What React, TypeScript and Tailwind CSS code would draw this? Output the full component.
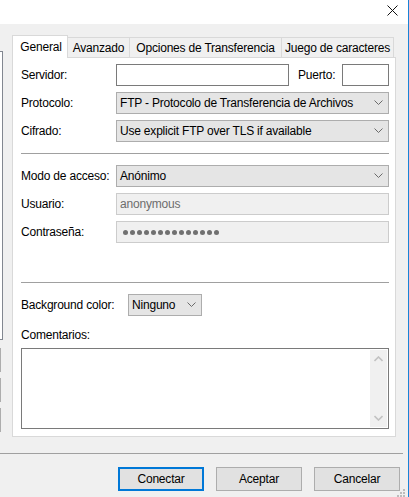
import React from "react";

function Chevron() {
  return (
    <svg width="9" height="6" viewBox="0 0 9 6" className="shrink-0">
      <polyline points="0.5,0.5 4.5,4.5 8.5,0.5" fill="none" stroke="#6a6a6a" strokeWidth="1" />
    </svg>
  );
}

function Select({ text, className = "" }: { text: string; className?: string }) {
  return (
    <div
      className={`h-[22px] border border-[#adadad] bg-[#e5e5e5] flex items-center pl-[3px] pr-[5px] ${className}`}
    >
      <span className="flex-1 whitespace-nowrap">{text}</span>
      <Chevron />
    </div>
  );
}

function Label({ children, w = "w-[95px]" }: { children: React.ReactNode; w?: string }) {
  return <div className={`${w} shrink-0 whitespace-nowrap`}>{children}</div>;
}

export default function App() {
  const dots = Array.from({ length: 14 });
  return (
    <div className="w-[409px] h-[497px] bg-[#f0f0f0] border-r border-[#1883d7] flex flex-col overflow-hidden relative text-[12px] leading-[16px] tracking-[-0.2px] text-black font-['Liberation_Sans',Arial,sans-serif]">
      {/* title bar */}
      <div className="h-[24px] bg-white flex justify-end items-start shrink-0">
        <svg width="11" height="11" viewBox="0 0 11 11" className="mt-[5px] mr-[10px]">
          <line x1="0.5" y1="0.5" x2="10.5" y2="10.5" stroke="#111" strokeWidth="1" />
          <line x1="10.5" y1="0.5" x2="0.5" y2="10.5" stroke="#111" strokeWidth="1" />
        </svg>
      </div>

      {/* main */}
      <div className="flex items-start shrink-0">
        {/* left strip */}
        <div className="w-[12px] shrink-0 flex flex-col pt-[27px]">
          <div className="w-[3px] h-[289px] border-r border-t border-b border-[#828790] bg-white" />
          <div className="w-[1px] h-[24px] bg-[#adadad] mt-[8px]" />
          <div className="w-[1px] h-[24px] bg-[#adadad] mt-[6px]" />
          <div className="w-[1px] h-[24px] bg-[#adadad] mt-[6px]" />
        </div>

        {/* tab control */}
        <div className="w-[384px] shrink-0 flex flex-col pt-[11px]">
          <div className="flex items-end h-[22px]">
            <div className="relative z-10 w-[56px] h-[23px] -mb-px bg-white border border-b-0 border-[#d9d9d9] flex items-start justify-center pt-[3px] pl-[2px]">
              General
            </div>
            <div className="w-[63px] h-[20px] -ml-px border border-b-0 border-[#d9d9d9] flex items-center justify-center">
              Avanzado
            </div>
            <div className="w-[153px] h-[20px] -ml-px border border-b-0 border-[#d9d9d9] flex items-center justify-center">
              Opciones de Transferencia
            </div>
            <div className="w-[113px] h-[20px] -ml-px border border-b-0 border-[#d9d9d9] flex items-center justify-center">
              Juego de caracteres
            </div>
          </div>

          <div className="h-[380px] border border-[#d9d9d9] bg-white pl-[8px] pr-[6px] pt-[6px] flex flex-col">
            <div className="flex items-center h-[22px]">
              <Label>Servidor:</Label>
              <div className="w-[173px] h-[22px] border border-[#7a7a7a] bg-white" />
              <div className="ml-[9px] w-[44px] whitespace-nowrap">Puerto:</div>
              <div className="w-[47px] h-[22px] border border-[#7a7a7a] bg-white" />
            </div>
            <div className="flex items-center h-[22px] mt-[6px]">
              <Label>Protocolo:</Label>
              <Select text="FTP - Protocolo de Transferencia de Archivos" className="flex-1" />
            </div>
            <div className="flex items-center h-[22px] mt-[6px]">
              <Label>Cifrado:</Label>
              <Select text="Use explicit FTP over TLS if available" className="flex-1" />
            </div>

            <div className="h-px bg-[#a0a0a0] mt-[11px]" />

            <div className="flex items-center h-[22px] mt-[11px]">
              <Label>Modo de acceso:</Label>
              <Select text="Anónimo" className="flex-1" />
            </div>
            <div className="flex items-center h-[22px] mt-[6px]">
              <Label>Usuario:</Label>
              <div className="flex-1 h-[22px] border border-[#cccccc] bg-[#f0f0f0] flex items-center pl-[3px] text-[#6d6d6d]">
                anonymous
              </div>
            </div>
            <div className="flex items-center h-[22px] mt-[6px]">
              <Label>Contraseña:</Label>
              <div className="flex-1 h-[22px] border border-[#cccccc] bg-[#f0f0f0] flex items-center pl-[6px] gap-[2px]">
                {dots.map((_, i) => (
                  <span key={i} className="w-[5px] h-[5px] rounded-full bg-[#707070]" />
                ))}
              </div>
            </div>

            <div className="h-px bg-[#a0a0a0] mt-[39px]" />

            <div className="flex items-center h-[22px] mt-[11px]">
              <Label w="w-[107px]">Background color:</Label>
              <Select text="Ninguno" className="w-[74px]" />
            </div>

            <div className="mt-[11px] h-[16px]">Comentarios:</div>

            <div className="mt-[5px] h-[81px] border border-[#7a7a7a] bg-white flex justify-end p-px">
              <div className="w-[17px] bg-[#f0f0f0] flex flex-col items-center justify-between py-[6px]">
                <svg width="9" height="6" viewBox="0 0 9 6">
                  <polyline points="0.5,5 4.5,1 8.5,5" fill="none" stroke="#c2c2c2" strokeWidth="1.6" />
                </svg>
                <svg width="9" height="6" viewBox="0 0 9 6">
                  <polyline points="0.5,1 4.5,5 8.5,1" fill="none" stroke="#c2c2c2" strokeWidth="1.6" />
                </svg>
              </div>
            </div>
          </div>
        </div>
      </div>

      {/* separator */}
      <div className="h-px w-[403px] bg-[#a0a0a0] mt-[16px] shrink-0" />

      {/* buttons */}
      <div className="flex justify-end gap-[12px] pr-[8px] mt-[13px] shrink-0">
        <div className="w-[86px] h-[24px] border-2 border-[#0078d7] bg-[#e1e1e1] flex items-center justify-center">
          Conectar
        </div>
        <div className="w-[86px] h-[24px] border border-[#adadad] bg-[#e1e1e1] flex items-center justify-center">
          Aceptar
        </div>
        <div className="w-[86px] h-[24px] border border-[#adadad] bg-[#e1e1e1] flex items-center justify-center">
          Cancelar
        </div>
      </div>

      {/* resize grip */}
      <div className="absolute right-[3px] bottom-0 w-[8px] h-[8px]">
        <span className="absolute left-[6px] top-0 w-[2px] h-[2px] bg-[#bcbcbc]" />
        <span className="absolute left-[3px] top-[3px] w-[2px] h-[2px] bg-[#bcbcbc]" />
        <span className="absolute left-[6px] top-[3px] w-[2px] h-[2px] bg-[#bcbcbc]" />
        <span className="absolute left-0 top-[6px] w-[2px] h-[2px] bg-[#bcbcbc]" />
        <span className="absolute left-[3px] top-[6px] w-[2px] h-[2px] bg-[#bcbcbc]" />
        <span className="absolute left-[6px] top-[6px] w-[2px] h-[2px] bg-[#bcbcbc]" />
      </div>
    </div>
  );
}
